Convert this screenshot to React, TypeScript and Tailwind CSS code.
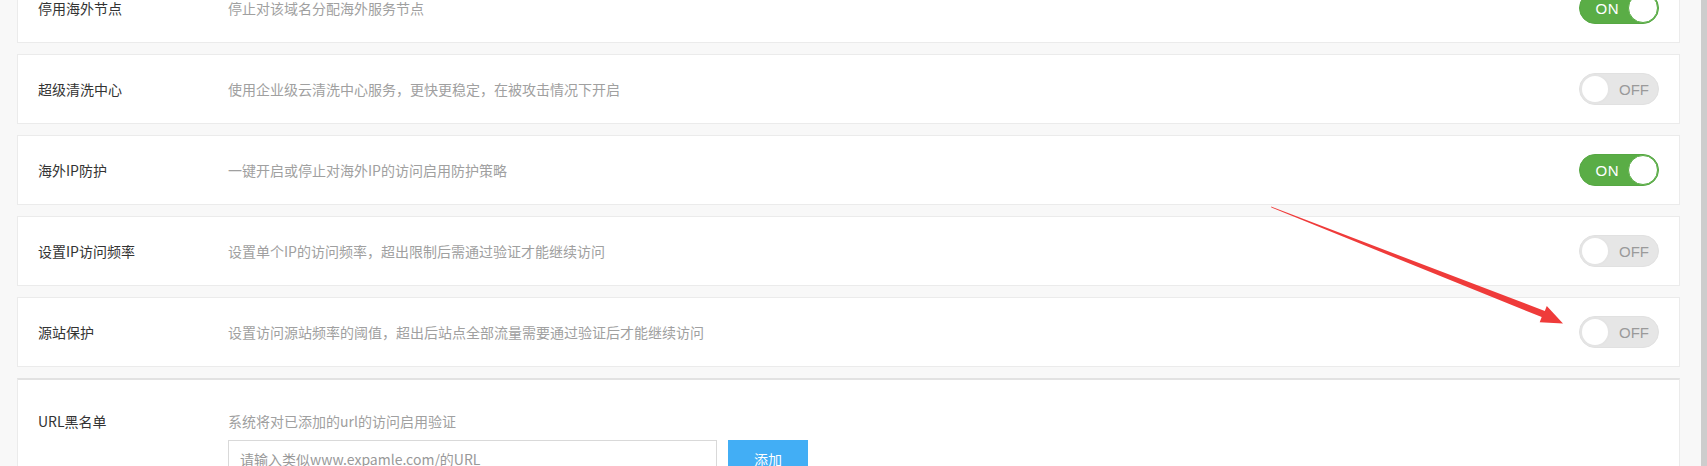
import React from "react";

type Row = {
  title: string;
  desc: string;
  on: boolean;
};

const rows: Row[] = [
  { title: "停用海外节点", desc: "停止对该域名分配海外服务节点", on: true },
  { title: "超级清洗中心", desc: "使用企业级云清洗中心服务，更快更稳定，在被攻击情况下开启", on: false },
  { title: "海外IP防护", desc: "一键开启或停止对海外IP的访问启用防护策略", on: true },
  { title: "设置IP访问频率", desc: "设置单个IP的访问频率，超出限制后需通过验证才能继续访问", on: false },
  { title: "源站保护", desc: "设置访问源站频率的阈值，超出后站点全部流量需要通过验证后才能继续访问", on: false },
];

const Toggle = ({ on }: { on: boolean }) => {
  if (on) {
    return (
      <div className="flex items-center justify-end w-[80px] h-[32px] rounded-full bg-[#5aad46] border border-[#56a843] shrink-0">
        <span className="mr-[9px] text-[15px] leading-none text-white font-['Liberation_Sans',sans-serif] tracking-[0.5px]">
          ON
        </span>
        <div className="w-[30px] h-[30px] rounded-full bg-white border border-[#5aad46]" />
      </div>
    );
  }
  return (
    <div className="flex items-center w-[80px] h-[32px] rounded-full bg-[#e6e6e6] border border-[#e1e1e1] shrink-0">
      <div className="w-[30px] h-[30px] rounded-full bg-white border-2 border-[#e4e4e4]" />
      <span className="ml-[9px] text-[15px] leading-none text-[#9a9a9a] font-['Liberation_Sans',sans-serif]">
        OFF
      </span>
    </div>
  );
};

export default function App() {
  return (
    <div className="relative flex w-[1707px] h-[466px] overflow-hidden bg-[#f8f8f8] font-['Noto_Sans_CJK_SC',sans-serif] text-[14px]">
      <div className="flex-1 pl-[17px] pr-[21px]">
        <div className="flex flex-col gap-[11px] -mt-[27px]">
          {rows.map((row, i) => (
            <div
              key={i}
              className="flex items-center h-[70px] bg-white border border-[#ebebeb] pl-[20px] pr-[20px]"
            >
              <div className="w-[190px] text-[#333] shrink-0">{row.title}</div>
              <div className="flex-1 text-[#a0a0a0]">{row.desc}</div>
              <Toggle on={row.on} />
            </div>
          ))}

          {/* URL blacklist */}
          <div className="flex bg-white border border-[#ebebeb] border-t-2 border-t-[#e2e2e2] pl-[20px] pr-[20px] pt-[31px] pb-[20px]">
            <div className="w-[190px] text-[#333] leading-[20px] shrink-0">URL黑名单</div>
            <div className="flex-1">
              <div className="text-[#a0a0a0] leading-[20px]">系统将对已添加的url的访问启用验证</div>
              <div className="flex gap-[11px] mt-[9px]">
                <div className="w-[489px] h-[38px] border border-[#d9d9d9] flex items-center px-[11px] text-[#999]">
                  请输入类似www.expamle.com/的URL
                </div>
                <button className="w-[80px] h-[38px] bg-[#42aef5] text-white">添加</button>
              </div>
            </div>
          </div>
        </div>
      </div>
      <div className="w-[6px] h-full bg-[#cdcdcd]" />

      {/* annotation arrow */}
      <svg
        className="absolute inset-0 pointer-events-none"
        width="1707"
        height="466"
        viewBox="0 0 1707 466"
      >
        <polygon
          points="1271,206.6 1271.4,207.6 1541.7,317.1 1539.7,322.2 1563,323.5 1546.8,305.9 1544.8,311 1271,206.6"
          fill="#ef3b3a"
        />
      </svg>
    </div>
  );
}
